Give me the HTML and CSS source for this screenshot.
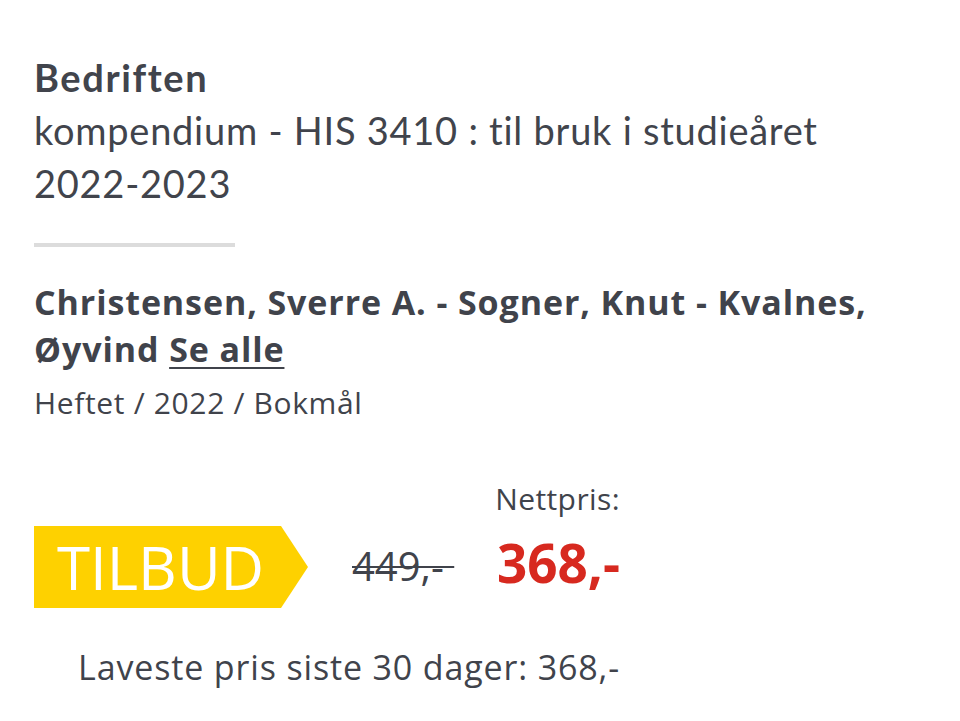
FILE: index.html
```html
<!DOCTYPE html>
<html lang="no">
<head>
<meta charset="utf-8">
<title>Bedriften</title>
<link rel="stylesheet" href="styles.css">
</head>
<body>
<main class="product">
  <h1 class="title">
    <span class="title-main">Bedriften</span>
    <span class="title-sub">kompendium - HIS 3410 : til bruk i studieåret 2022-2023</span>
  </h1>
  <hr class="divider">
  <p class="authors"><span class="names">Christensen, Sverre A. - Sogner, Knut - Kvalnes,</span> <span class="names">Øyvind</span> <a class="see-all" href="#">Se alle</a></p>
  <p class="meta">Heftet / 2022 / Bokmål</p>
  <section class="pricing">
    <div class="price-row">
      <div class="badge">TILBUD</div>
      <del class="old-price">449,-&nbsp;</del>
      <div class="net">
        <div class="net-label">Nettpris:</div>
        <div class="net-price">368,-</div>
      </div>
    </div>
    <p class="lowest">Laveste pris siste 30 dager: 368,-</p>
  </section>
</main>
</body>
</html>
```
FILE: styles.css
```css
html, body {
  margin: 0;
  padding: 0;
  background: #ffffff;
}

.product {
  padding: 51px 34px 0 34px;
  color: #40434b;
  font-family: "Open Sans", "Noto Sans", sans-serif;
}

.title {
  margin: 0;
  font-family: Lato, "Liberation Sans", sans-serif;
  font-size: 38px;
  line-height: 53px;
  color: #41444c;
}

.title-main {
  display: block;
  font-weight: 700;
  letter-spacing: 1.6px;
}

.title-sub {
  display: block;
  font-weight: 400;
  letter-spacing: 0.75px;
  max-width: 820px;
}

.divider {
  width: 201px;
  height: 4px;
  margin: 33px 0 0 0;
  border: 0;
  background: #dcdcdc;
}

.authors {
  margin: 32px 0 0 0;
  font-size: 34px;
  line-height: 47px;
  font-weight: 700;
  letter-spacing: 0.9px;
  max-width: 880px;
}

.see-all {
  color: inherit;
  text-decoration: underline;
  text-decoration-thickness: 2px;
  text-underline-offset: 5px;
}

.meta {
  margin: 9px 0 0 0;
  font-size: 30px;
  line-height: 42px;
  letter-spacing: 0.65px;
}

.pricing {
  width: 586px;
  margin-top: 55px;
}

.price-row {
  display: flex;
  align-items: flex-end;
}

.badge {
  position: relative;
  width: 247px;
  height: 82px;
  box-sizing: border-box;
  padding-left: 23px;
  background: #fed100;
  color: #ffffff;
  font-size: 60px;
  line-height: 82px;
}

.badge::after {
  content: "";
  position: absolute;
  left: 100%;
  top: 0;
  border-top: 41px solid transparent;
  border-bottom: 41px solid transparent;
  border-left: 27px solid #fed100;
}

.old-price {
  margin-left: 71px;
  margin-bottom: 18px;
  font-size: 40px;
  line-height: 48px;
  color: #40434b;
  text-decoration: line-through;
  text-decoration-thickness: 2px;
}

.net {
  margin-left: auto;
  margin-bottom: 13px;
  text-align: right;
}

.net-label {
  font-size: 30px;
  line-height: 40px;
  letter-spacing: 0.4px;
}

.net-price {
  margin-top: 12px;
  font-size: 53px;
  line-height: 64px;
  font-weight: 700;
  color: #d7291f;
}

.lowest {
  margin: 37px 0 0 0;
  text-align: right;
  font-size: 34px;
  line-height: 44px;
  letter-spacing: 0.85px;
}
```
